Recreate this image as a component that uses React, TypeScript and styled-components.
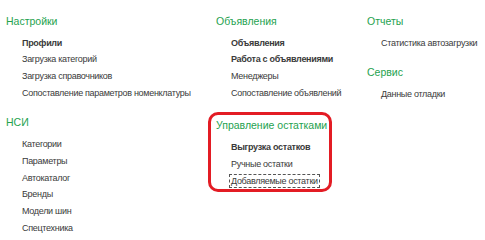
import React from "react";
import styled, { createGlobalStyle } from "styled-components";

const GlobalStyle = createGlobalStyle`
  html, body {
    margin: 0;
    padding: 0;
    background: #fff;
  }
  body {
    font-family: "Liberation Sans", Arial, sans-serif;
  }
`;

type Item = { text: string; bold?: boolean; focused?: boolean };
type Section = { title: string; items: Item[]; highlighted?: boolean };

const columns: Section[][] = [
  [
    {
      title: "Настройки",
      items: [
        { text: "Профили", bold: true },
        { text: "Загрузка категорий" },
        { text: "Загрузка справочников" },
        { text: "Сопоставление параметров номенклатуры" },
      ],
    },
    {
      title: "НСИ",
      items: [
        { text: "Категории" },
        { text: "Параметры" },
        { text: "Автокаталог" },
        { text: "Бренды" },
        { text: "Модели шин" },
        { text: "Спецтехника" },
      ],
    },
  ],
  [
    {
      title: "Объявления",
      items: [
        { text: "Объявления", bold: true },
        { text: "Работа с объявлениями", bold: true },
        { text: "Менеджеры" },
        { text: "Сопоставление объявлений" },
      ],
    },
    {
      title: "Управление остатками",
      highlighted: true,
      items: [
        { text: "Выгрузка остатков", bold: true },
        { text: "Ручные остатки" },
        { text: "Добавляемые остатки", focused: true },
      ],
    },
  ],
  [
    {
      title: "Отчеты",
      items: [{ text: "Статистика автозагрузки" }],
    },
    {
      title: "Сервис",
      items: [{ text: "Данные отладки" }],
    },
  ],
];

const colWidths = [210, 151, 118];
const indents = [16, 15, 14];

const Page = styled.div`
  display: flex;
  padding: 13px 0 0 6px;
`;

const Column = styled.div<{ $width: number }>`
  width: ${(p) => p.$width}px;
  flex: none;
  display: flex;
  flex-direction: column;
  gap: 12.6px;
`;

const Group = styled.div<{ $highlighted?: boolean }>`
  display: flex;
  flex-direction: column;
  ${(p) =>
    p.$highlighted
      ? `
    margin: -2px 0 0 -8px;
    padding: 2px 0 0 5px;
    width: 113px;
    border: 3px solid #e31c24;
    border-radius: 10px;
  `
      : ""}
`;

const Title = styled.div`
  font-size: 10.5px;
  line-height: 16px;
  color: #25a24f;
  white-space: nowrap;
  margin-bottom: 5.6px;
`;

const List = styled.div<{ $indent: number }>`
  display: flex;
  flex-direction: column;
  padding-left: ${(p) => p.$indent}px;
`;

const Link = styled.div<{ $bold?: boolean; $focused?: boolean }>`
  font-size: 9px;
  letter-spacing: -0.3px;
  line-height: 16.8px;
  height: 16.8px;
  color: #3a3a3a;
  font-weight: ${(p) => (p.$bold ? 700 : 400)};
  white-space: nowrap;
  span {
    outline: ${(p) => (p.$focused ? "1px dashed #555" : "none")};
    outline-offset: 1px;
  }
`;

export default function App() {
  return (
    <>
      <GlobalStyle />
      <Page>
        {columns.map((col, ci) => (
          <Column key={ci} $width={colWidths[ci]}>
            {col.map((s) => (
              <Group key={s.title} $highlighted={s.highlighted}>
                <Title>{s.title}</Title>
                <List $indent={indents[ci]}>
                  {s.items.map((it) => (
                    <Link key={it.text} $bold={it.bold} $focused={it.focused}>
                      <span>{it.text}</span>
                    </Link>
                  ))}
                </List>
              </Group>
            ))}
          </Column>
        ))}
      </Page>
    </>
  );
}
